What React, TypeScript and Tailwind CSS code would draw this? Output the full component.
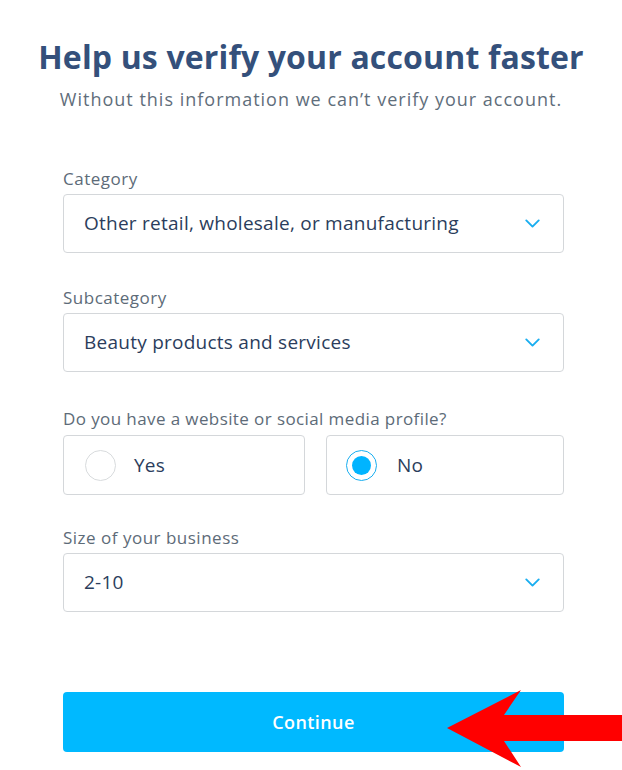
import { ChevronDown } from 'lucide-react';

const fields = [
  { label: 'Category', value: 'Other retail, wholesale, or manufacturing' },
  { label: 'Subcategory', value: 'Beauty products and services' },
];

const SelectBox = ({ label, value, className = '' }: { label: string; value: string; className?: string }) => (
  <div className={className}>
    <p className="text-[17px] tracking-[0.5px] text-[#5d6b78] leading-5">{label}</p>
    <div className="mt-[5px] h-[59px] rounded-[4px] border border-[#d4d7da] flex items-center justify-between pl-[20px] pr-[18px]">
      <span className="text-[19px] tracking-[0.25px] text-[#2b3d5c]">{value}</span>
      <ChevronDown className="h-[25px] w-[25px] text-[#19aef0]" strokeWidth={1.8} />
    </div>
  </div>
);

export default function App() {
  return (
    <div className="relative w-[622px] h-[770px] overflow-hidden bg-white font-['Open_Sans',sans-serif]">
      {/* Header */}
      <div className="pt-[36px] text-center">
        <h1 className="text-[32px] font-bold tracking-[0.15px] text-[#34507b] leading-[42px]">Help us verify your account faster</h1>
        <p className="mt-[9px] text-[18px] tracking-[1px] text-[#5f6e7b] leading-6">Without this information we can’t verify your account.</p>
      </div>

      {/* Form */}
      <div className="ml-[63px] w-[501px] mt-[58px]">
        {fields.map((f, i) => (
          <SelectBox key={f.label} label={f.label} value={f.value} className={i > 0 ? 'mt-[35px]' : ''} />
        ))}

        <div className="mt-[37px]">
          <p className="text-[17px] tracking-[0.4px] text-[#5d6b78] leading-5">Do you have a website or social media profile?</p>
          <div className="mt-[6px] flex gap-[21px]">
            <div className="w-[242px] h-[60px] rounded-[4px] border border-[#d4d7da] flex items-center pl-[21px]">
              <span className="w-[31px] h-[31px] rounded-full border border-[#d8dbdd]" />
              <span className="ml-[18px] text-[19px] tracking-[0.25px] text-[#2b3d5c]">Yes</span>
            </div>
            <div className="flex-1 h-[60px] rounded-[4px] border border-[#d4d7da] flex items-center pl-[19px]">
              <span className="w-[31px] h-[31px] rounded-full border border-[#19aef0] flex items-center justify-center">
                <span className="w-[19px] h-[19px] rounded-full bg-[#00b4ff]" />
              </span>
              <span className="ml-[20px] text-[19px] tracking-[0.25px] text-[#2b3d5c]">No</span>
            </div>
          </div>
        </div>

        <SelectBox label="Size of your business" value="2-10" className="mt-[33px]" />

        <button className="mt-[80px] w-full h-[60px] rounded-[4px] bg-[#00b9ff] text-white text-[18px] font-semibold tracking-[0.4px]">
          Continue
        </button>
      </div>

      {/* Annotation arrow */}
      <svg className="absolute left-0 top-0 pointer-events-none" width="622" height="770" viewBox="0 0 622 770">
        <polygon points="447,728 521,690 504,715 622,715 622,741 504,741 521,767" fill="#ff0000" />
      </svg>
    </div>
  );
}
